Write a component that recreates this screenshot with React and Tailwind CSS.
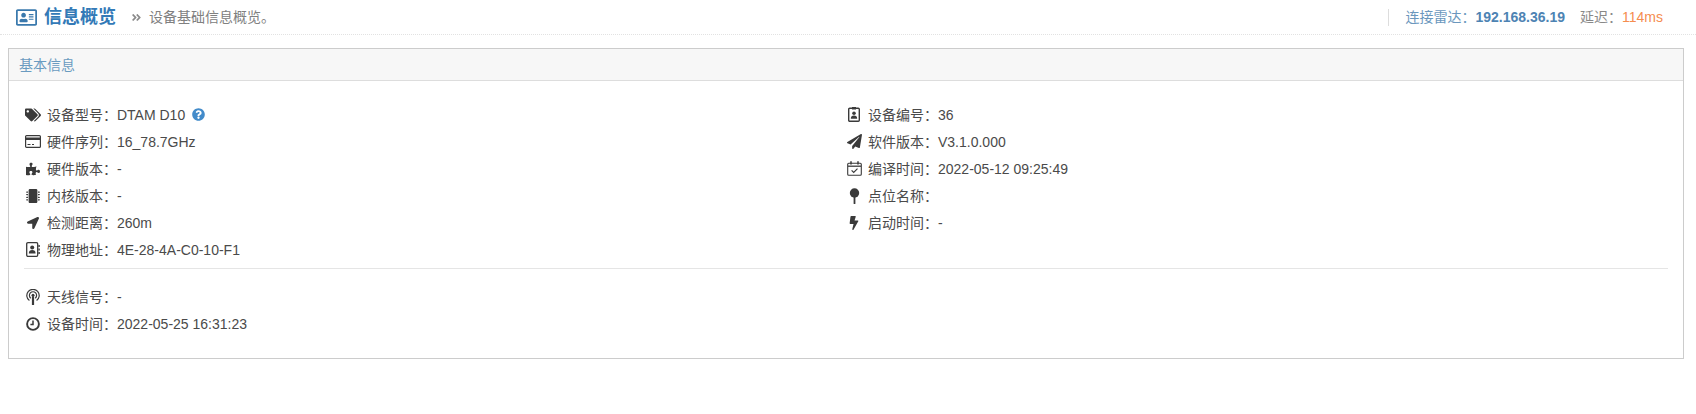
import React from "react";
import { FaTags, FaPuzzlePiece, FaMicrochip, FaLocationArrow, FaQuestionCircle, FaRegAddressCard, FaAngleDoubleRight, FaPaperPlane, FaBolt } from "react-icons/fa";

const font = "font-['Liberation_Sans','Noto_Sans_CJK_SC',sans-serif]";
const COLON = "\uFF1A";

const Card = () => (
  <svg width="16" height="13" viewBox="0 0 16 13" fill="none" stroke="currentColor">
    <rect x="0.6" y="0.6" width="14.8" height="11.8" rx="1" strokeWidth="1.2" />
    <rect x="1" y="2.5" width="14" height="2.5" fill="currentColor" stroke="none" />
    <path d="M2.5 9.5h3M7 9.5h2" strokeWidth="1" />
  </svg>
);
const Contact = () => (
  <svg width="14" height="15" viewBox="0 0 14 15" fill="currentColor">
    <rect x="0.7" y="0.7" width="11" height="13.6" rx="1.2" fill="none" stroke="currentColor" strokeWidth="1.3" />
    <circle cx="6.2" cy="5.6" r="2" />
    <path d="M2.8 11.4c0-2.2 1.4-3.3 3.4-3.3s3.4 1.1 3.4 3.3z" />
    <path d="M12.4 3h1.4v2h-1.4zM12.4 6.5h1.4v2h-1.4zM12.4 10h1.4v2h-1.4z" />
  </svg>
);
const Badge = () => (
  <svg width="12" height="15" viewBox="0 0 12 15" fill="currentColor">
    <rect x="0.7" y="1.2" width="10.6" height="13" rx="1" fill="none" stroke="currentColor" strokeWidth="1.4" />
    <rect x="4" y="0" width="4" height="2.5" />
    <circle cx="6" cy="6.3" r="1.8" />
    <path d="M2.8 11.8c0-2 1.2-3.2 3.2-3.2s3.2 1.2 3.2 3.2z" />
  </svg>
);
const Calendar = () => (
  <svg width="15" height="15" viewBox="0 0 15 15" fill="none" stroke="currentColor">
    <rect x="0.7" y="2.2" width="13.6" height="12" rx="1" strokeWidth="1.1" />
    <path d="M1 5.2h13" strokeWidth="1.3" />
    <path d="M4 0.3v3.2M11 0.3v3.2" strokeWidth="1.5" />
    <path d="M4.6 9.4l2.1 2.1 3.8-3.9" strokeWidth="1.2" />
  </svg>
);
const Pin = () => (
  <svg width="11" height="16" viewBox="0 0 11 16" fill="currentColor">
    <circle cx="5.5" cy="5" r="4.7" />
    <rect x="4.6" y="8" width="1.8" height="8" rx="0.6" />
  </svg>
);
const Antenna = () => (
  <svg width="14" height="16" viewBox="0 0 14 16" fill="none" stroke="currentColor" strokeWidth="1.2">
    <path d="M3.4 11.6a6.2 6.2 0 1 1 7.2 0" />
    <path d="M4.8 9.2a3.6 3.6 0 1 1 4.4 0" />
    <circle cx="7" cy="6.2" r="1.5" fill="currentColor" stroke="none" />
    <path d="M7 8v7.6" strokeWidth="2.2" strokeLinecap="round" />
  </svg>
);
const Clock = () => (
  <svg width="14" height="14" viewBox="0 0 14 14" fill="none" stroke="currentColor">
    <circle cx="7" cy="7" r="5.9" strokeWidth="1.9" />
    <path d="M7 3.4v4H4.4" strokeWidth="1.5" />
  </svg>
);

function Row({ icon: Icon, label, value, extra, size }) {
  return (
    <div className="flex h-[27px] items-center text-sm text-[#4a4a4a]">
      <span className="flex w-[23px] shrink-0 items-center justify-center pr-[5px] text-[#3a3a3a]">
        {size ? <Icon size={size} /> : <Icon />}
      </span>
      <span>{label}{COLON}</span>
      <span>{value}</span>
      {extra}
    </div>
  );
}

const left = [
  { icon: FaTags, label: "设备型号", value: "DTAM D10", size: 16, extra: <FaQuestionCircle size={13} className="ml-[7px] text-[#428bca]" /> },
  { icon: Card, label: "硬件序列", value: "16_78.7GHz" },
  { icon: FaPuzzlePiece, label: "硬件版本", value: "-", size: 14 },
  { icon: FaMicrochip, label: "内核版本", value: "-", size: 14 },
  { icon: FaLocationArrow, label: "检测距离", value: "260m", size: 12 },
  { icon: Contact, label: "物理地址", value: "4E-28-4A-C0-10-F1" },
];
const right = [
  { icon: Badge, label: "设备编号", value: "36" },
  { icon: FaPaperPlane, label: "软件版本", value: "V3.1.0.000", size: 15 },
  { icon: Calendar, label: "编译时间", value: "2022-05-12 09:25:49" },
  { icon: Pin, label: "点位名称", value: "" },
  { icon: FaBolt, label: "启动时间", value: "-", size: 14 },
];
const bottom = [
  { icon: Antenna, label: "天线信号", value: "-" },
  { icon: Clock, label: "设备时间", value: "2022-05-25 16:31:23" },
];

export default function App() {
  return (
    <div className={`${font} min-h-[414px] bg-white`}>
      <header className="flex h-[35px] items-center justify-between border-b border-dotted border-[#e2e2e2] pl-4 pr-[33px]">
        <div className="flex items-center">
          <FaRegAddressCard size={21} className="text-[#3a79ad]" />
          <h1 className="ml-[7px] text-lg font-bold text-[#337ab7]">信息概览</h1>
          <FaAngleDoubleRight size={11} className="ml-[15px] text-[#8a8a8a]" />
          <span className="ml-[7px] text-sm text-[#808080]">设备基础信息概览。</span>
        </div>
        <div className="flex h-[17px] items-center border-l border-[#ddd] pl-4 text-sm">
          <span className="text-[#6b97bd]">连接雷达{COLON}</span>
          <span className="font-bold text-[#4d83b3]">192.168.36.19</span>
          <span className="ml-[15px] text-[#888]">延迟{COLON}</span>
          <span className="text-[#f58d4f]">114ms</span>
        </div>
      </header>
      <section className="ml-2 mr-[12px] mt-[13px] border border-[#ccc]">
        <div className="flex h-[32px] items-center border-b border-[#ddd] bg-[#f7f7f7] px-[10px] text-sm text-[#6a9bc0]">基本信息</div>
        <div className="px-[15px] pt-[20px] pb-[21px]">
          <div className="grid grid-cols-[821px_1fr]">
            <div>{left.map((r) => <Row key={r.label} {...r} />)}</div>
            <div>{right.map((r) => <Row key={r.label} {...r} />)}</div>
          </div>
          <div className="mt-[5px] mb-[14px] border-t border-[#e5e5e5]" />
          <div>{bottom.map((r) => <Row key={r.label} {...r} />)}</div>
        </div>
      </section>
    </div>
  );
}
